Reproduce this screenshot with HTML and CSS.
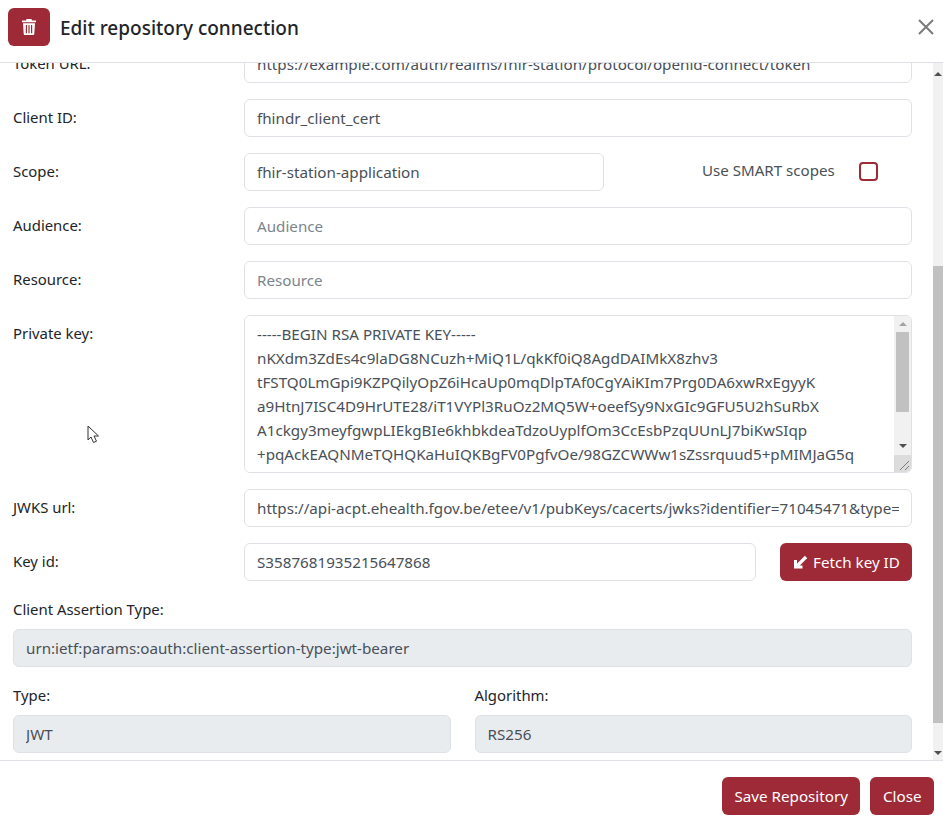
FILE: index.html
```html
<!DOCTYPE html>
<html lang="en">
<head>
    <meta charset="UTF-8">
    <title>Edit repository connection</title>
    <link rel="stylesheet" href="styles.css">
</head>
<body>
    <div class="modal">
        <div class="modal-header">
            <div class="header-icon">
                <svg width="14" height="16" viewBox="0 0 14 16"><path fill="#fff" d="M4.6 0h4.800l.7 1.500H14v1.800H0V1.500h3.900zM1 4.300h12l-.7 10.400c0 .7-.6 1.300-1.300 1.300H3c-.7 0-1.300-.6-1.300-1.300zm2.800 1.600v8.300h1.200V5.900zm2.600 0v8.300h1.200V5.900zm2.600 0v8.300h1.200V5.900z"/></svg>
            </div>
            <h1 class="modal-title">Edit repository connection</h1>
            <svg class="close-x" width="18" height="18" viewBox="0 0 18 18"><path d="M2 2l14 14M16 2L2 16" stroke="#7b7b7b" stroke-width="2" fill="none"/></svg>
        </div>
        <div class="modal-body">
            <div class="scroll-content">
                <div class="inner">
                    <div class="row">
                        <label>Token URL:</label>
                        <input class="field" type="text" value="https://example.com/auth/realms/fhir-station/protocol/openid-connect/token">
                    </div>
                    <div class="row">
                        <label>Client ID:</label>
                        <input class="field" type="text" value="fhindr_client_cert">
                    </div>
                    <div class="row">
                        <label>Scope:</label>
                        <input class="field scope-field" type="text" value="fhir-station-application">
                        <span class="smart-label">Use SMART scopes</span>
                        <span class="checkbox"></span>
                    </div>
                    <div class="row">
                        <label>Audience:</label>
                        <input class="field" type="text" placeholder="Audience">
                    </div>
                    <div class="row">
                        <label>Resource:</label>
                        <input class="field" type="text" placeholder="Resource">
                    </div>
                    <div class="row">
                        <label>Private key:</label>
                        <div class="key-box">
                            <textarea class="key-text" spellcheck="false">-----BEGIN RSA PRIVATE KEY-----
nKXdm3ZdEs4c9laDG8NCuzh+MiQ1L/qkKf0iQ8AgdDAIMkX8zhv3
tFSTQ0LmGpi9KZPQilyOpZ6iHcaUp0mqDlpTAf0CgYAiKIm7Prg0DA6xwRxEgyyK
a9HtnJ7ISC4D9HrUTE28/iT1VYPl3RuOz2MQ5W+oeefSy9NxGIc9GFU5U2hSuRbX
A1ckgy3meyfgwpLIEkgBIe6khbkdeaTdzoUyplfOm3CcEsbPzqUUnLJ7biKwSIqp
+pqAckEAQNMeTQHQKaHuIQKBgFV0PgfvOe/98GZCWWw1sZssrquud5+pMIMJaG5q</textarea>
                            <div class="key-scroll">
                                <span class="arrow-up"></span>
                                <div class="key-thumb"></div>
                                <span class="arrow-down"></span>
                                <div class="grip">
                                    <svg width="17" height="17" viewBox="0 0 17 17"><path d="M6 15L15 6M11 15l4-4" stroke="#7d7d7d" stroke-width="1" fill="none"/></svg>
                                </div>
                            </div>
                        </div>
                    </div>
                    <div class="row">
                        <label>JWKS url:</label>
                        <input class="field" type="text" value="https://api-acpt.ehealth.fgov.be/etee/v1/pubKeys/cacerts/jwks?identifier=71045471&amp;type=">
                    </div>
                    <div class="row">
                        <label>Key id:</label>
                        <input class="field" type="text" value="S3587681935215647868">
                        <button class="btn fetch-btn" type="button">
                            <svg width="14" height="14" viewBox="0 0 14 14"><path d="M13 2L4 11" stroke="#fff" stroke-width="3.200" fill="none"/><path fill="#fff" d="M1 5V13.500h8.500v-3H4V5z"/></svg>
                            Fetch key ID
                        </button>
                    </div>
                    <div class="stack">
                        <label>Client Assertion Type:</label>
                        <input class="field" type="text" disabled value="urn:ietf:params:oauth:client-assertion-type:jwt-bearer">
                    </div>
                    <div class="two-col">
                        <div class="stack">
                            <label>Type:</label>
                            <input class="field" type="text" disabled value="JWT">
                        </div>
                        <div class="stack">
                            <label>Algorithm:</label>
                            <input class="field" type="text" disabled value="RS256">
                        </div>
                    </div>
                </div>
            </div>
            <div class="page-scroll">
                <span class="arrow-up"></span>
                <div class="page-thumb"></div>
                <span class="arrow-down"></span>
            </div>
        </div>
        <div class="modal-footer">
            <button class="btn" type="button">Save Repository</button>
            <button class="btn" type="button">Close</button>
        </div>
    </div>
    <svg class="cursor" width="14" height="20" viewBox="0 0 14 20"><path d="M1 1v14l3-3 2.500 5.500 3-1.300L7 11h4.500z" fill="#fff" stroke="#333" stroke-width="1"/></svg>
</body>
</html>
```

FILE: styles.css
```css
* {
    box-sizing: border-box;
}

html, body {
    height: 100%;
}

body {
    margin: 0;
    background-color: #fff;
    color: #212529;
    font-family: "Noto Sans", "Open Sans", sans-serif;
    font-size: 14.9px;
    overflow: hidden;
}

.modal {
    display: flex;
    flex-direction: column;
    height: 824px;
}

.modal-header {
    display: flex;
    align-items: center;
    height: 63px;
    padding: 0 8px 8px 8px;
    border-bottom: 1px solid #dee2e6;
    flex-shrink: 0;
}

.header-icon {
    display: flex;
    align-items: center;
    justify-content: center;
    width: 42px;
    height: 38px;
    background-color: #9d2a36;
    border-radius: 6px;
}

.modal-title {
    flex: 1;
    margin: 2px 0 0 10px;
    font-size: 19px;
    font-weight: 500;
    line-height: 38px;
}

.modal-body {
    display: flex;
    flex: 1;
    min-height: 0;
}

.scroll-content {
    flex: 1;
    overflow: hidden;
}

.inner {
    margin-top: -18px;
    padding: 0 21px 0 13px;
}

.row {
    display: flex;
    align-items: flex-start;
    margin-bottom: 16px;
}

.row > label {
    width: 231px;
    flex-shrink: 0;
    line-height: 36px;
}

.field {
    display: block;
    flex: 1;
    width: 100%;
    min-width: 0;
    height: 38px;
    padding: 0 12px;
    border: 1px solid #dee2e6;
    border-radius: 6px;
    background-color: #fff;
    color: #495057;
    font-family: inherit;
    font-size: 15.2px;
    outline: none;
}

.field::placeholder {
    color: #7c848b;
}

.field:disabled {
    background-color: #e9ecef;
    opacity: 1;
}

.stack .field {
    flex: none;
}

.scope-field {
    flex: 0 0 360px;
}

.smart-label {
    margin-left: 98px;
    color: #495057;
    font-size: 15.1px;
    line-height: 35px;
    white-space: nowrap;
}

.checkbox {
    width: 19px;
    height: 19px;
    margin: 9px 34px 0 auto;
    border: 2px solid #9d2a36;
    border-radius: 4px;
}

.key-box {
    display: flex;
    flex: 1;
    height: 158px;
    border: 1px solid #dee2e6;
    border-radius: 6px;
    overflow: hidden;
}

.key-text {
    flex: 1;
    padding: 6px 12px;
    border: none;
    outline: none;
    resize: none;
    overflow: hidden;
    color: #495057;
    font-family: inherit;
    font-size: 15.2px;
    line-height: 24px;
    white-space: pre;
}

.key-scroll {
    position: relative;
    display: flex;
    flex-direction: column;
    align-items: center;
    width: 17px;
    background-color: #f1f1f1;
}

.arrow-up, .arrow-down {
    display: block;
    flex-shrink: 0;
    width: 0;
    height: 0;
    border-left: 4px solid transparent;
    border-right: 4px solid transparent;
}

.arrow-up {
    margin: 6px 0 6px;
    border-bottom: 4px solid #a3a3a3;
}

.arrow-down {
    margin-top: 32px;
    border-top: 4px solid #505050;
}

.key-thumb {
    width: 13px;
    height: 80px;
    background-color: #c1c1c1;
}

.grip {
    position: absolute;
    bottom: 0;
    left: 0;
    width: 17px;
    height: 17px;
    background-color: #dcdcdc;
}

.grip svg {
    display: block;
}

.btn {
    height: 38px;
    padding: 0 12.5px;
    border: none;
    border-radius: 6px;
    background-color: #9d2a36;
    color: #fff;
    font-family: inherit;
    font-size: 15.2px;
    cursor: pointer;
}

.fetch-btn {
    display: flex;
    align-items: center;
    gap: 6px;
    flex-shrink: 0;
    width: 132px;
    margin-left: 24px;
    padding: 0 0 0 13px;
    white-space: nowrap;
}

.stack {
    display: flex;
    flex-direction: column;
    margin-bottom: 16px;
}

.stack > label {
    line-height: 24px;
    margin-bottom: 8px;
}

.two-col {
    display: grid;
    grid-template-columns: 1fr 1fr;
    gap: 24px;
}

.page-scroll {
    display: flex;
    flex-direction: column;
    align-items: center;
    flex-shrink: 0;
    width: 10px;
    background-color: #f1f1f1;
}

.page-scroll .arrow-up {
    margin: 9px 0 0;
    border-bottom-color: #505050;
}

.page-scroll .arrow-down {
    margin-top: auto;
    margin-bottom: 5px;
}

.page-thumb {
    width: 100%;
    height: 457px;
    margin-top: 190px;
    background-color: #c1c1c1;
}

.modal-footer {
    display: flex;
    justify-content: flex-end;
    gap: 10px;
    flex-shrink: 0;
    height: 64px;
    padding: 16px 9px 0 0;
    border-top: 1px solid #dee2e6;
}

.cursor {
    position: absolute;
    top: 425px;
    left: 87px;
}
```
